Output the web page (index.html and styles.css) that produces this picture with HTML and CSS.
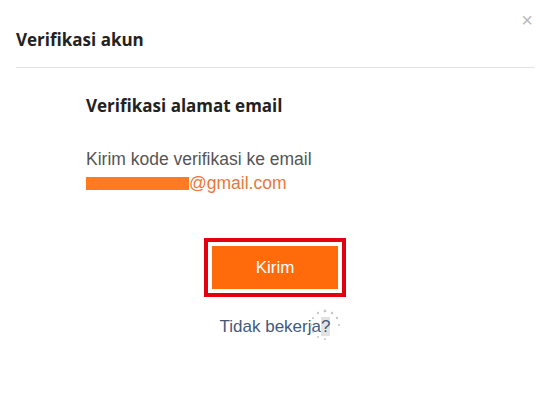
FILE: index.html
```html
<!DOCTYPE html>
<html>
<head>
    <title>Verifikasi akun</title>
    <meta charset="utf-8">
    <link rel="stylesheet" href="styles.css">
</head>
<body>
    <div class="modal">
        <div class="modal-head">
            <h1>Verifikasi akun</h1>
            <span class="close">&times;</span>
        </div>
        <div class="modal-body">
            <h2>Verifikasi alamat email</h2>
            <p class="desc">Kirim kode verifikasi ke email</p>
            <p class="email"><span class="masked"></span>@gmail.com</p>

            <div class="actions">
                <div class="highlight">
                    <button class="btn">Kirim</button>
                </div>
                <a class="help" href="#">Tidak bekerja<span class="q">?</span>
                    <svg class="spinner" width="34" height="34" viewBox="0 0 34 34">
                        <g fill="#c8c8c8">
                            <circle cx="17" cy="3" r="1.4"/>
                            <circle cx="24" cy="5" r="1.3"/>
                            <circle cx="29" cy="10" r="1.2"/>
                            <circle cx="31" cy="17" r="1.1"/>
                            <circle cx="10" cy="5" r="1.2"/>
                            <circle cx="5" cy="10" r="1.1"/>
                            <circle cx="3" cy="17" r="1"/>
                            <circle cx="5" cy="24" r="1"/>
                            <circle cx="10" cy="29" r="1"/>
                            <circle cx="17" cy="31" r="1"/>
                        </g>
                    </svg>
                </a>
            </div>
        </div>
    </div>
</body>
</html>
```

FILE: styles.css
```css
body {
    margin: 0;
    background: #fff;
    font-family: "Liberation Sans", Arial, sans-serif;
}
.modal {
    width: 550px;
    height: 410px;
    background: #fff;
}
.modal-head {
    position: relative;
    margin: 0 15px 0 16px;
    padding: 28px 0 16px;
    border-bottom: 1px solid #e4e4e4;
}
h1 {
    margin: 0;
    font-family: "Open Sans", sans-serif;
    font-size: 17px;
    font-weight: 700;
    line-height: 23px;
    color: #222;
}
.close {
    position: absolute;
    right: 2px;
    top: 10px;
    font-size: 20px;
    line-height: 20px;
    color: #bbb;
}
.modal-body {
    padding: 0 0 0 86px;
}
h2 {
    margin: 26px 0 0;
    font-family: "Open Sans", sans-serif;
    font-size: 17px;
    font-weight: 700;
    line-height: 23px;
    color: #222;
}
.desc {
    margin: 30px 0 0;
    font-size: 17.5px;
    line-height: 24px;
    color: #555;
}
.email {
    margin: 0;
    font-size: 17.5px;
    line-height: 24px;
    color: #e8783c;
    display: flex;
    align-items: center;
}
.masked {
    display: inline-block;
    width: 103px;
    height: 13px;
    background: #ff7a21;
}
.actions {
    width: 378px;
    display: flex;
    flex-direction: column;
    align-items: center;
    margin-top: 43px;
}
.highlight {
    border: 4px solid #e3000f;
    padding: 4px;
}
.btn {
    display: block;
    width: 126px;
    height: 43px;
    border: none;
    background: #ff6a0a;
    color: #fff;
    font-family: "Liberation Sans", Arial, sans-serif;
    font-size: 17px;
}
.help {
    position: relative;
    margin-top: 18px;
    font-size: 17px;
    line-height: 24px;
    color: #3f5a7c;
    text-decoration: none;
}
.q {
    background: #e2e2e2;
}
.spinner {
    position: absolute;
    right: -12px;
    top: -7px;
}
```
